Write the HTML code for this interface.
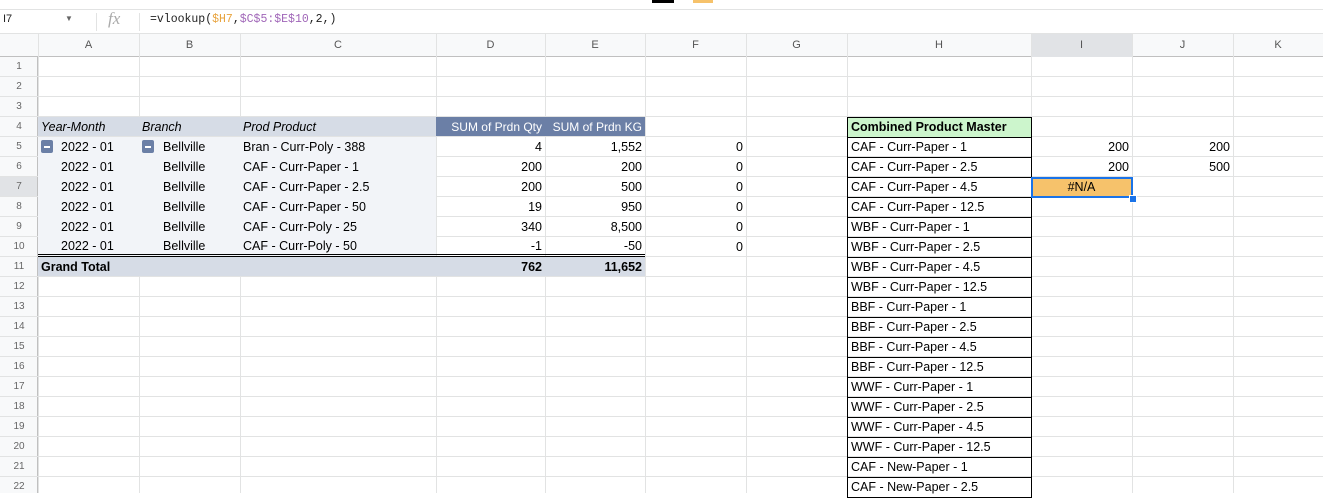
<!DOCTYPE html>
<html><head><meta charset="utf-8"><style>
body{margin:0;width:1323px;height:493px;overflow:hidden;background:#fff;font-family:"Liberation Sans",Arial,sans-serif;position:relative}
.a{position:absolute}
.c{position:absolute;height:20px;line-height:20px;font-size:12.5px;color:#000;padding:0 3px;box-sizing:border-box;white-space:nowrap;overflow:hidden}
.r{text-align:right}
.ctr{text-align:center}
.hd{position:absolute;top:34px;height:23px;line-height:23px;font-size:11px;color:#555;text-align:center}
.rn{position:absolute;left:0;width:38px;height:20px;line-height:20px;font-size:10px;color:#666;text-align:center}
.v{position:absolute;top:34px;width:1px;height:459px;background:#e2e3e3}
.mb{position:absolute;width:12px;height:13px;background:#6b7fa6;border-radius:2px}
.mb:after{content:"";position:absolute;left:3px;top:6px;width:6px;height:1.5px;background:#fff}
.hb{position:absolute;left:847px;width:185px;height:21px;box-sizing:border-box;border:1px solid #000;line-height:19px;font-size:12.5px;padding-left:3px}
</style></head><body>
<div class="a" style="left:652px;top:0;width:22px;height:3px;background:#000"></div>
<div class="a" style="left:693px;top:0;width:20px;height:3px;background:#f6c26b"></div>
<div class="a" style="left:0;top:9px;width:1323px;height:1px;background:#e2e3e3"></div>
<div class="a" style="left:3px;top:13px;font-size:11px;color:#222">I7</div>
<div class="a" style="left:65px;top:14px;font-size:8px;color:#666">▼</div>
<div class="a" style="left:96px;top:13px;width:1px;height:18px;background:#e2e3e3"></div>
<div class="a" style="left:108px;top:9px;font-family:'Liberation Serif',serif;font-style:italic;font-size:17px;color:#aaa">fx</div>
<div class="a" style="left:139px;top:13px;width:1px;height:18px;background:#e2e3e3"></div>
<div class="a" style="left:150px;top:13px;font-family:'Liberation Mono',monospace;font-size:11.5px;color:#222">=vlookup(<span style="color:#e8a33d">$H7</span>,<span style="color:#a066b8">$C$5:$E$10</span>,2,)</div>
<div class="a" style="left:0;top:33px;width:1323px;height:1px;background:#e2e3e3"></div>
<div class="a" style="left:0;top:34px;width:1323px;height:23px;background:#f8f9fa;border-bottom:1px solid #c0c0c0;box-sizing:border-box"></div>
<div class="a" style="left:0;top:57px;width:38px;height:436px;background:#f8f9fa;border-right:1px solid #c0c0c0;box-sizing:border-box"></div>
<div class="a" style="left:1031px;top:34px;width:101px;height:23px;background:#e1e3e6"></div>
<div class="a" style="left:0;top:177px;width:37px;height:20px;background:#e1e3e6"></div>
<div class="a" style="left:0;top:57px;width:1323px;height:436px;background:repeating-linear-gradient(to bottom,transparent 0,transparent 19px,#e2e3e3 19px,#e2e3e3 20px)"></div>
<div class="v" style="left:38px"></div><div class="v" style="left:139px"></div><div class="v" style="left:240px"></div><div class="v" style="left:436px"></div><div class="v" style="left:545px"></div><div class="v" style="left:645px"></div><div class="v" style="left:746px"></div><div class="v" style="left:847px"></div><div class="v" style="left:1031px"></div><div class="v" style="left:1132px"></div><div class="v" style="left:1233px"></div>
<div class="hd" style="left:38px;width:101px">A</div><div class="hd" style="left:139px;width:101px">B</div><div class="hd" style="left:240px;width:196px">C</div><div class="hd" style="left:436px;width:109px">D</div><div class="hd" style="left:545px;width:100px">E</div><div class="hd" style="left:645px;width:101px">F</div><div class="hd" style="left:746px;width:101px">G</div><div class="hd" style="left:847px;width:184px">H</div><div class="hd" style="left:1031px;width:101px">I</div><div class="hd" style="left:1132px;width:101px">J</div><div class="hd" style="left:1233px;width:90px">K</div>
<div class="rn" style="top:57px">1</div><div class="rn" style="top:77px">2</div><div class="rn" style="top:97px">3</div><div class="rn" style="top:117px">4</div><div class="rn" style="top:137px">5</div><div class="rn" style="top:157px">6</div><div class="rn" style="top:177px">7</div><div class="rn" style="top:197px">8</div><div class="rn" style="top:217px">9</div><div class="rn" style="top:237px">10</div><div class="rn" style="top:257px">11</div><div class="rn" style="top:277px">12</div><div class="rn" style="top:297px">13</div><div class="rn" style="top:317px">14</div><div class="rn" style="top:337px">15</div><div class="rn" style="top:357px">16</div><div class="rn" style="top:377px">17</div><div class="rn" style="top:397px">18</div><div class="rn" style="top:417px">19</div><div class="rn" style="top:437px">20</div><div class="rn" style="top:457px">21</div><div class="rn" style="top:477px">22</div>
<div class="a" style="left:38px;top:117px;width:398px;height:19px;background:#d6dce6"></div>
<div class="a" style="left:436px;top:117px;width:209px;height:19px;background:#6b7fa6"></div>
<div class="a" style="left:38px;top:137px;width:398px;height:119px;background:#f2f4f8"></div>
<div class="a" style="left:38px;top:257px;width:607px;height:19px;background:#d6dce6"></div>
<div class="a" style="left:38px;top:254px;width:607px;height:1px;background:#000"></div>
<div class="a" style="left:38px;top:256px;width:607px;height:1px;background:#000"></div>
<div class="c" style="left:38px;top:117px;font-style:italic">Year-Month</div>
<div class="c" style="left:139px;top:117px;font-style:italic">Branch</div>
<div class="c" style="left:240px;top:117px;font-style:italic">Prod Product</div>
<div class="c r" style="left:436px;top:117px;width:109px;color:#fff;font-size:12px">SUM of Prdn Qty</div>
<div class="c r" style="left:545px;top:117px;width:100px;color:#fff;font-size:12px">SUM of Prdn KG</div>
<div class="mb" style="left:41px;top:140px"></div><div class="mb" style="left:142px;top:140px"></div>
<div class="c" style="left:58px;top:137px">2022 - 01</div><div class="c" style="left:160px;top:137px">Bellville</div><div class="c" style="left:240px;top:137px">Bran - Curr-Poly - 388</div><div class="c r" style="left:436px;top:137px;width:109px">4</div><div class="c r" style="left:545px;top:137px;width:100px">1,552</div>
<div class="c" style="left:58px;top:157px">2022 - 01</div><div class="c" style="left:160px;top:157px">Bellville</div><div class="c" style="left:240px;top:157px">CAF - Curr-Paper - 1</div><div class="c r" style="left:436px;top:157px;width:109px">200</div><div class="c r" style="left:545px;top:157px;width:100px">200</div>
<div class="c" style="left:58px;top:177px">2022 - 01</div><div class="c" style="left:160px;top:177px">Bellville</div><div class="c" style="left:240px;top:177px">CAF - Curr-Paper - 2.5</div><div class="c r" style="left:436px;top:177px;width:109px">200</div><div class="c r" style="left:545px;top:177px;width:100px">500</div>
<div class="c" style="left:58px;top:197px">2022 - 01</div><div class="c" style="left:160px;top:197px">Bellville</div><div class="c" style="left:240px;top:197px">CAF - Curr-Paper - 50</div><div class="c r" style="left:436px;top:197px;width:109px">19</div><div class="c r" style="left:545px;top:197px;width:100px">950</div>
<div class="c" style="left:58px;top:217px">2022 - 01</div><div class="c" style="left:160px;top:217px">Bellville</div><div class="c" style="left:240px;top:217px">CAF - Curr-Poly - 25</div><div class="c r" style="left:436px;top:217px;width:109px">340</div><div class="c r" style="left:545px;top:217px;width:100px">8,500</div>
<div class="c" style="left:58px;top:236px">2022 - 01</div><div class="c" style="left:160px;top:236px">Bellville</div><div class="c" style="left:240px;top:236px">CAF - Curr-Poly - 50</div><div class="c r" style="left:436px;top:236px;width:109px">-1</div><div class="c r" style="left:545px;top:236px;width:100px">-50</div>
<div class="c" style="left:38px;top:257px;font-weight:bold">Grand Total</div><div class="c r" style="left:436px;top:257px;width:109px;font-weight:bold">762</div><div class="c r" style="left:545px;top:257px;width:100px;font-weight:bold">11,652</div>
<div class="c r" style="left:645px;top:137px;width:101px">0</div><div class="c r" style="left:645px;top:157px;width:101px">0</div><div class="c r" style="left:645px;top:177px;width:101px">0</div><div class="c r" style="left:645px;top:197px;width:101px">0</div><div class="c r" style="left:645px;top:217px;width:101px">0</div><div class="c r" style="left:645px;top:237px;width:101px">0</div>
<div class="hb" style="top:117px;background:#ccf5cc;font-weight:bold">Combined Product Master</div>
<div class="hb" style="top:137px">CAF - Curr-Paper - 1</div>
<div class="hb" style="top:157px">CAF - Curr-Paper - 2.5</div>
<div class="hb" style="top:177px">CAF - Curr-Paper - 4.5</div>
<div class="hb" style="top:197px">CAF - Curr-Paper - 12.5</div>
<div class="hb" style="top:217px">WBF - Curr-Paper - 1</div>
<div class="hb" style="top:237px">WBF - Curr-Paper - 2.5</div>
<div class="hb" style="top:257px">WBF - Curr-Paper - 4.5</div>
<div class="hb" style="top:277px">WBF - Curr-Paper - 12.5</div>
<div class="hb" style="top:297px">BBF - Curr-Paper - 1</div>
<div class="hb" style="top:317px">BBF - Curr-Paper - 2.5</div>
<div class="hb" style="top:337px">BBF - Curr-Paper - 4.5</div>
<div class="hb" style="top:357px">BBF - Curr-Paper - 12.5</div>
<div class="hb" style="top:377px">WWF - Curr-Paper - 1</div>
<div class="hb" style="top:397px">WWF - Curr-Paper - 2.5</div>
<div class="hb" style="top:417px">WWF - Curr-Paper - 4.5</div>
<div class="hb" style="top:437px">WWF - Curr-Paper - 12.5</div>
<div class="hb" style="top:457px">CAF - New-Paper - 1</div>
<div class="hb" style="top:477px">CAF - New-Paper - 2.5</div>
<div class="c r" style="left:1031px;top:137px;width:101px">200</div><div class="c r" style="left:1132px;top:137px;width:101px">200</div>
<div class="c r" style="left:1031px;top:157px;width:101px">200</div><div class="c r" style="left:1132px;top:157px;width:101px">500</div>
<div class="a" style="left:1031px;top:177px;width:102px;height:21px;background:#f6c26b;border:2px solid #1a73e8;box-sizing:border-box"></div>
<div class="c ctr" style="left:1031px;top:177px;width:101px">#N/A</div>
<div class="a" style="left:1129px;top:195px;width:6px;height:6px;background:#1a73e8;border:1px solid #fff"></div>
</body></html>
